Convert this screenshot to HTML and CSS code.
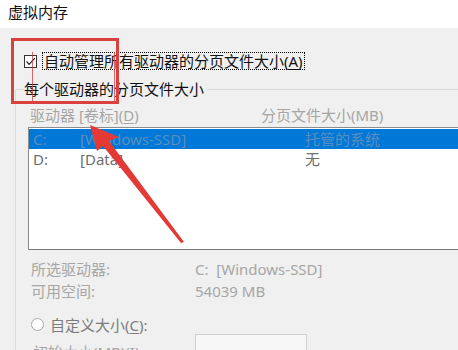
FILE: index.html
```html
<!DOCTYPE html>
<html lang="zh-CN">
<head>
<meta charset="utf-8">
<title>虚拟内存</title>
<link rel="stylesheet" href="styles.css">
</head>
<body>
<div class="window">
  <div class="titlebar">虚拟内存</div>
  <div class="content">
    <div class="check-row">
      <span class="checkbox"><svg width="13" height="13" viewBox="0 0 13 13"><path d="M2.5 6.5 L5.2 9.3 L10.8 3.2" fill="none" stroke="#222" stroke-width="1.2"/></svg></span>
      <span class="check-label">自动管理所有驱动器的分页文件大小(<u>A</u>)</span>
    </div>
    <fieldset class="group">
      <legend>每个驱动器的分页文件大小</legend>
      <div class="list-head">
        <span class="h-drive">驱动器 [卷标](<u>D</u>)</span>
        <span class="h-size">分页文件大小(MB)</span>
      </div>
      <div class="listbox">
        <div class="row selected"><span class="c1">C:</span><span class="c2">[Windows-SSD]</span><span class="c3">托管的系统</span></div>
        <div class="row"><span class="c1">D:</span><span class="c2">[Data]</span><span class="c3">无</span></div>
      </div>
      <div class="info">
        <div class="info-row"><span class="lbl">所选驱动器:</span><span class="val">C:&nbsp;&nbsp;[Windows-SSD]</span></div>
        <div class="info-row"><span class="lbl">可用空间:</span><span class="val">54039 MB</span></div>
      </div>
      <div class="radio-row">
        <span class="radio"></span>
        <span class="radio-label">自定义大小(<u>C</u>):</span>
      </div>
      <div class="field-row">
        <span class="lbl">初始大小(MB)(<u>I</u>):</span>
        <span class="input"></span>
      </div>
    </fieldset>
  </div>
  <div class="mark-box"></div>
  <div class="mark-inner"></div>
  <svg class="arrow" width="458" height="350" viewBox="0 0 458 350">
    <polygon points="90,125 119,137 109,141 184,242 181,243 103,146 97,151" fill="#e53935"/>
  </svg>
</div>
</body>
</html>
```

FILE: styles.css
```css
html, body {
  margin: 0;
  padding: 0;
}
body {
  width: 458px;
  height: 350px;
  overflow: hidden;
  background: #f0f0f0;
  font-family: "Noto Sans", "Noto Sans CJK SC", sans-serif;
  font-size: 15px;
  color: #1a1a1a;
}
.window {
  position: relative;
  width: 458px;
  height: 350px;
  overflow: hidden;
}
.titlebar {
  height: 28px;
  background: #ffffff;
  padding-left: 8px;
  line-height: 24px;
  font-size: 15px;
  color: #111;
}
.content {
  padding-top: 24px;
}
.check-row {
  display: flex;
  align-items: center;
  height: 18px;
  padding-left: 24px;
}
.checkbox {
  width: 13px;
  height: 13px;
  border: 1px solid #333;
  box-sizing: border-box;
  background: #fff;
  display: flex;
  margin-right: 5px;
}
.checkbox svg {
  margin: -1px;
}
.check-label {
  border: 1px dotted #000;
  line-height: 16px;
  padding: 0 1px;
  color: #111;
}
u {
  text-decoration: underline;
  text-underline-offset: 2px;
}
.group {
  margin: 10px 0 0 15px;
  padding: 8px 0 0 12px;
  border: 1px solid #dcdcdc;
  border-right: none;
  border-bottom: none;
  min-width: 0;
}
.group legend {
  margin-left: -4px;
  padding: 0 2px 0 0;
  line-height: 18px;
  color: #111;
}
.list-head {
  display: flex;
  height: 18px;
  line-height: 18px;
  color: #a6a6a6;
  padding-left: 2px;
  margin-bottom: 3px;
}
.h-drive {
  width: 231px;
}
.listbox {
  height: 123px;
  box-sizing: border-box;
  border: 1px solid #8c8c8c;
  border-bottom-color: #7a7a7a;
  border-right: none;
  background: #ffffff;
  padding-top: 1px;
}
.row {
  display: flex;
  height: 20px;
  line-height: 20px;
  color: #6e6e6e;
  padding-left: 4px;
}
.row.selected {
  background: #0078d7;
  color: #5c8dbf;
}
.c1 {
  width: 47px;
}
.c2 {
  width: 225px;
}
.info {
  padding-top: 8px;
}
.info-row {
  display: flex;
  height: 22px;
  line-height: 22px;
  color: #a6a6a6;
  padding-left: 3px;
}
.info-row .lbl {
  width: 164px;
}
.radio-row {
  display: flex;
  align-items: center;
  height: 20px;
  margin-top: 12px;
  padding-left: 3px;
}
.radio {
  width: 13px;
  height: 13px;
  border: 1px solid #a8a8a8;
  border-radius: 50%;
  box-sizing: border-box;
  background: #fff;
  margin-right: 6px;
}
.radio-label {
  color: #7c7c7c;
}
.field-row {
  display: flex;
  align-items: flex-start;
  padding-left: 5px;
  color: #a6a6a6;
  line-height: 20px;
}
.field-row .lbl {
  width: 162px;
  padding-top: 8px;
}
.input {
  width: 112px;
  height: 30px;
  box-sizing: border-box;
  border: 1px solid #d0d0d0;
  background: #f7f7f7;
  margin-top: 0px;
}
.mark-box {
  position: absolute;
  left: 11px;
  top: 38px;
  width: 108px;
  height: 66px;
  box-sizing: border-box;
  border: 3px solid #d9403e;
}
.mark-inner {
  position: absolute;
  left: 32px;
  top: 52px;
  width: 83px;
  height: 50px;
  box-sizing: border-box;
  border: 1px solid rgba(210, 60, 60, 0.75);
  border-top: none;
  border-bottom: none;
}
.arrow {
  position: absolute;
  left: 0;
  top: 0;
}
```
